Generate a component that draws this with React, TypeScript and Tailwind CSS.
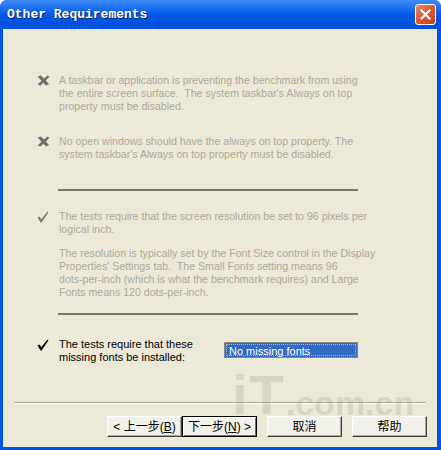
import { ReactNode } from "react";

const ui = { fontFamily: '"Liberation Sans", Arial, sans-serif' };
const cjk = { fontFamily: '"Liberation Sans", "Noto Sans CJK SC", sans-serif' };

function CrossIcon() {
  return (
    <svg width="13" height="11" viewBox="0 0 13 11" className="mt-[1px]">
      <path d="M0.5 1.5 L4 0.5 L12 9 L9 10.5 Z" fill="#6e6e6e" />
      <path d="M10.5 0.5 L12.5 1.8 L3.5 10.5 L0.5 9.5 Z" fill="#6e6e6e" />
    </svg>
  );
}

function CheckIcon({ color }: { color: string }) {
  return (
    <svg width="12" height="12" viewBox="0 0 12 12" className="mt-[1px]">
      <path d="M0.5 6.5 L2.5 5.5 L4.3 8.2 L10.5 0.5 L11.5 1.3 L4.6 11.5 L3.6 11.5 Z" fill={color} />
    </svg>
  );
}

function Row({ icon, children }: { icon: ReactNode; children: ReactNode }) {
  return (
    <div className="flex pl-[34px]">
      <div className="w-[22px] shrink-0">{icon}</div>
      <div className="leading-[13px] whitespace-nowrap">{children}</div>
    </div>
  );
}

function Sep() {
  return <div className="ml-[55px] h-[2px] w-[300px] bg-[#76756a]" />;
}

function Btn({ children, primary }: { children: ReactNode; primary?: boolean }) {
  return (
    <div
      className={
        "relative z-10 flex h-[21px] w-[75px] items-center justify-center bg-[#f2f1ea] text-[12px] text-black " +
        (primary
          ? "border border-black shadow-[inset_1px_1px_0_#fff,inset_-1px_-1px_0_#716f64]"
          : "border-t border-l border-t-white border-l-white border-b border-r border-b-[#404040] border-r-[#404040] shadow-[inset_-1px_-1px_0_#aca899]")
      }
      style={cjk}
    >
      {children}
    </div>
  );
}

export default function App() {
  const dim = "text-[10.6px] text-[#aca899]";
  return (
    <div className="flex h-[450px] w-[441px] flex-col overflow-hidden rounded-t-[7px] bg-[#0054e3]">
      <div className="flex h-[29px] shrink-0 items-center justify-between bg-gradient-to-b from-[#3d8cf7] via-[#0058e6] to-[#0050dd] pl-[7px] pr-[5px]">
        <span
          className="text-[13px] font-bold text-white [text-shadow:1px_1px_0_#0a246a]"
          style={{ fontFamily: '"Liberation Mono", "Courier New", monospace' }}
        >
          Other Requirements
        </span>
        <div className="flex h-[21px] w-[21px] items-center justify-center rounded-[3px] border border-white bg-gradient-to-br from-[#ec8a66] via-[#e0532f] to-[#c8401f]">
          <svg width="11" height="11" viewBox="0 0 11 11">
            <path d="M1.5 1.5 L9.5 9.5 M9.5 1.5 L1.5 9.5" stroke="#fff" strokeWidth="2.2" strokeLinecap="square" />
          </svg>
        </div>
      </div>

      <div className="relative mb-[3px] ml-[3px] mr-[4px] flex flex-1 flex-col bg-[#ece9d8]" style={ui}>
        <div className="pt-[45px]">
          <Row icon={<CrossIcon />}>
            <div className={dim}>
              A taskbar or application is preventing the benchmark from using
              <br />
              the entire screen surface.&nbsp; The system taskbar's Always on top
              <br />
              property must be disabled.
            </div>
          </Row>
        </div>
        <div className="pt-[22px]">
          <Row icon={<CrossIcon />}>
            <div className={dim}>
              No open windows should have the always on top property. The
              <br />
              system taskbar's Always on top property must be disabled.
            </div>
          </Row>
        </div>
        <div className="pt-[28px]">
          <Sep />
        </div>
        <div className="pt-[19px]">
          <Row icon={<CheckIcon color="#7a7a7a" />}>
            <div className={dim}>
              The tests require that the screen resolution be set to 96 pixels per
              <br />
              logical inch.
            </div>
            <div className={dim + " mt-[11px]"}>
              The resolution is typically set by the Font Size control in the Display
              <br />
              Properties' Settings tab.&nbsp; The Small Fonts setting means 96
              <br />
              dots-per-inch (which is what the benchmark requires) and Large
              <br />
              Fonts means 120 dots-per-inch.
            </div>
          </Row>
        </div>
        <div className="pt-[14px]">
          <Sep />
        </div>
        <div className="flex items-start pt-[23px]">
          <div className="w-[221px] shrink-0">
            <Row icon={<CheckIcon color="#000" />}>
              <div className="text-[11px] text-black">
                The tests require that these
                <br />
                missing fonts be installed:
              </div>
            </Row>
          </div>
          <div className="mt-[4px] h-[16px] w-[134px] border border-[#8a8878] bg-[#316ac5] p-[1px]">
            <div className="h-full border border-dotted border-[#e8b040] pl-[2px] text-[11px] leading-[12px] text-white">
              No missing fonts
            </div>
          </div>
        </div>

        <div className="flex-1" />

        <div className="mx-[11px] h-[2px] border-t border-t-[#aca899] border-b border-b-white" />
        <div className="flex items-center justify-end gap-[10px] pb-[10px] pr-[10px] pt-[12px]">
          <div className="flex">
            <Btn>
              &lt; 上一步(<span className="underline">B</span>)
            </Btn>
            <Btn primary>
              下一步(<span className="underline">N</span>) &gt;
            </Btn>
          </div>
          <Btn>取消</Btn>
          <Btn>帮助</Btn>
        </div>

        <div
          className="pointer-events-none absolute left-[229px] top-[345px] flex items-end font-black text-[#8a8676] opacity-20"
          style={{ fontFamily: '"Liberation Sans", Arial, sans-serif' }}
        >
          <span className="text-[56px] leading-[42px] tracking-[2px]">iT</span>
          <span className="text-[34px] leading-[26px]">.com.cn</span>
        </div>
      </div>
    </div>
  );
}
